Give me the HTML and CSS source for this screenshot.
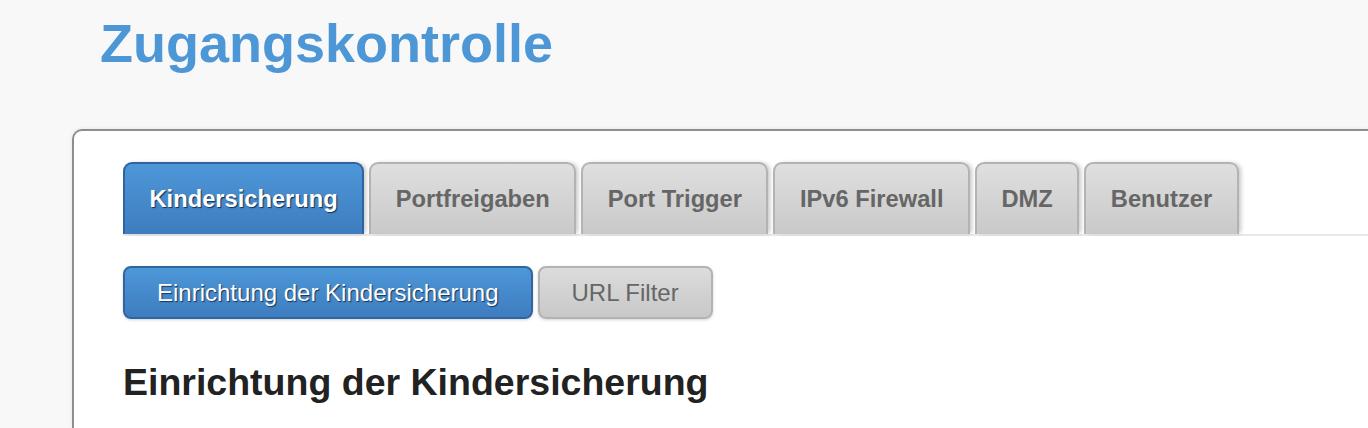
FILE: index.html
```
<!DOCTYPE html>
<html lang="de">
<head>
<meta charset="utf-8">
<title>Zugangskontrolle</title>
<link rel="stylesheet" href="styles.css">
</head>
<body>
<div class="page">
  <h1 class="title">Zugangskontrolle</h1>
  <div class="card">
    <div class="tabs">
      <div class="tab active">Kindersicherung</div>
      <div class="tab">Portfreigaben</div>
      <div class="tab">Port Trigger</div>
      <div class="tab">IPv6 Firewall</div>
      <div class="tab">DMZ</div>
      <div class="tab">Benutzer</div>
    </div>
    <div class="subtabs">
      <div class="subbtn active">Einrichtung der Kindersicherung</div>
      <div class="subbtn">URL Filter</div>
    </div>
    <h2 class="heading">Einrichtung der Kindersicherung</h2>
  </div>
</div>
</body>
</html>
```
FILE: styles.css
```
html, body {
  margin: 0;
  padding: 0;
}
body {
  background: #f8f8f8;
  overflow: hidden;
  font-family: "Liberation Sans", Arial, Helvetica, sans-serif;
  height: 428px;
}
.page {
  padding: 16px 0 0 72px;
}
.title {
  margin: 0 0 0 28px;
  font-size: 54px;
  line-height: 54px;
  font-weight: 700;
  color: #4d97d6;
}
.card {
  box-sizing: border-box;
  margin-top: 59px;
  height: 299px;
  background: #fff;
  border: 2px solid #8e8e8e;
  border-right: 0;
  border-bottom: 0;
  border-radius: 10px 0 0 0;
  padding: 31px 0 0 49px;
  box-shadow: 0 0 4px rgba(0, 0, 0, 0.08);
}
.tabs {
  display: flex;
  gap: 5px;
  height: 72px;
  border-bottom: 2px solid #e9e9e9;
}
.tab {
  box-sizing: border-box;
  height: 72px;
  display: flex;
  align-items: center;
  padding: 0 24.5px;
  border: 2px solid #b3b3b3;
  border-bottom: 0;
  border-radius: 9px 9px 0 0;
  background: linear-gradient(#dfdfdf, #c9c9c9);
  box-shadow: 3px 0 4px -1px rgba(0, 0, 0, 0.22);
  font-size: 23.7px;
  font-weight: 700;
  color: #666;
}
.tab.active {
  background: linear-gradient(#4d97d8, #3e7dbf);
  border-color: #2f659e;
  color: #fff;
  text-shadow: 1px 1px 1px rgba(10, 30, 60, 0.85);
}
.subtabs {
  display: flex;
  gap: 5px;
  margin-top: 30px;
}
.subbtn {
  box-sizing: border-box;
  height: 53px;
  display: flex;
  align-items: center;
  padding: 0 32px;
  border: 2px solid #b3b3b3;
  border-radius: 8px;
  background: linear-gradient(#dcdcdc, #c8c8c8);
  box-shadow: 0 1px 3px rgba(0, 0, 0, 0.18);
  font-size: 24px;
  color: #666;
}
.subbtn.active {
  background: linear-gradient(#4d97d8, #3e7dbf);
  border-color: #2f669f;
  color: #fff;
  text-shadow: 1px 1px 1px rgba(10, 30, 60, 0.8);
}
.heading {
  margin: 42px 0 0 0;
  font-size: 37.5px;
  font-weight: 700;
  color: #222;
}
```
